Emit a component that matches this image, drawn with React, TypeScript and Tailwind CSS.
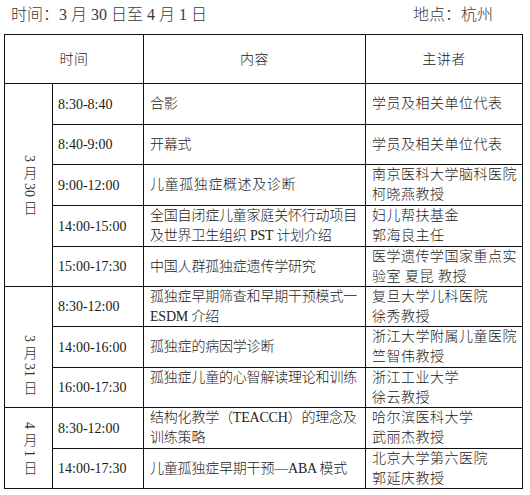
import React from "react";

const FONT = "font-['Liberation_Serif','Noto_Sans_CJK_SC',serif]";

type Row = { time: string; content: React.ReactNode; speaker: React.ReactNode; ctrack?: string };

const cell = "border-r border-b border-[#111] flex items-center";

function Lines({ a, b }: { a: string; b?: string }) {
  return (
    <div className="leading-[20px] whitespace-nowrap">
      <div>{a}</div>
      {b !== undefined && <div>{b === "" ? "\u00a0" : b}</div>}
    </div>
  );
}

function DateCell({ text, span, extra }: { text: string; span: string; extra?: string }) {
  return (
    <div className={`${cell} ${span} justify-center ${extra ?? ""}`}>
      <div className="[writing-mode:vertical-rl] [text-orientation:mixed] text-[14px] leading-[16px] text-[#333] whitespace-nowrap">
        {text}
      </div>
    </div>
  );
}

function RowCells({ r }: { r: Row }) {
  return (
    <>
      <div className={`${cell} pl-[5px] text-[14px] text-[#1a1a1a]`}>{r.time}</div>
      <div className={`${cell} pl-[6px] text-[14px] text-[#222] ${r.ctrack ?? "tracking-[-0.2px]"}`}>
        {r.content}
      </div>
      <div className={`${cell} pl-[6px] text-[14px] tracking-[0.5px] text-[#222]`}>{r.speaker}</div>
    </>
  );
}

const g1: Row[] = [
  { time: "8:30-8:40", content: <Lines a="合影" />, speaker: <Lines a="学员及相关单位代表" /> },
  { time: "8:40-9:00", content: <Lines a="开幕式" />, speaker: <Lines a="学员及相关单位代表" /> },
  {
    time: "9:00-12:00",
    content: <Lines a="儿童孤独症概述及诊断" />,
    speaker: <Lines a="南京医科大学脑科医院" b="柯晓燕教授" />,
    ctrack: "tracking-[0.6px]",
  },
  {
    time: "14:00-15:00",
    content: <Lines a="全国自闭症儿童家庭关怀行动项目" b="及世界卫生组织 PST 计划介绍" />,
    speaker: <Lines a="妇儿帮扶基金" b="郭海良主任" />,
  },
  {
    time: "15:00-17:30",
    content: <Lines a="中国人群孤独症遗传学研究" />,
    speaker: <Lines a="医学遗传学国家重点实" b="验室 夏昆 教授" />,
  },
];

const g2: Row[] = [
  {
    time: "8:30-12:00",
    content: <Lines a="孤独症早期筛查和早期干预模式一" b="ESDM 介绍" />,
    speaker: <Lines a="复旦大学儿科医院" b="徐秀教授" />,
  },
  {
    time: "14:00-16:00",
    content: <Lines a="孤独症的病因学诊断" />,
    speaker: <Lines a="浙江大学附属儿童医院" b="竺智伟教授" />,
  },
  {
    time: "16:00-17:30",
    content: <Lines a="孤独症儿童的心智解读理论和训练" b="" />,
    speaker: <Lines a="浙江工业大学" b="徐云教授" />,
  },
];

const g3: Row[] = [
  {
    time: "8:30-12:00",
    content: <Lines a="结构化教学（TEACCH）的理念及" b="训练策略" />,
    speaker: <Lines a="哈尔滨医科大学" b="武丽杰教授" />,
  },
  {
    time: "14:00-17:30",
    content: <Lines a="儿童孤独症早期干预—ABA 模式" />,
    speaker: <Lines a="北京大学第六医院" b="郭延庆教授" />,
  },
];

export default function App() {
  return (
    <div className={`w-[530px] h-[495px] bg-white overflow-hidden font-light ${FONT}`}>
      <div className="h-[34px] flex justify-between pl-[11px] pr-[37px] pt-[4px] text-[16px] leading-[21px] text-[#3a3a3a]">
        <span>时间：3 月 30 日至 4 月 1 日</span>
        <span>地点：杭州</span>
      </div>
      <div className="ml-[4px] w-[519px] border-l border-t border-[#111] grid grid-cols-[48px_91px_222px_157px] grid-rows-[49px_41px_40px_41px_41px_40px_40px_41px_40px_41px_40px]">
        <div className={`${cell} col-span-2 justify-center text-[14px] tracking-[0.5px] text-[#222]`}>时间</div>
        <div className={`${cell} justify-center text-[14px] tracking-[0.5px] text-[#222]`}>内容</div>
        <div className={`${cell} justify-center text-[14px] tracking-[0.5px] text-[#222]`}>主讲者</div>

        <DateCell text="3 月 30 日" span="row-span-5" />
        {g1.map((r, i) => (
          <RowCells key={"a" + i} r={r} />
        ))}
        <DateCell text="3 月 31 日" span="row-span-3" extra="pt-[35px]" />
        {g2.map((r, i) => (
          <RowCells key={"b" + i} r={r} />
        ))}
        <DateCell text="4 月 1 日" span="row-span-2" />
        {g3.map((r, i) => (
          <RowCells key={"c" + i} r={r} />
        ))}
      </div>
    </div>
  );
}
